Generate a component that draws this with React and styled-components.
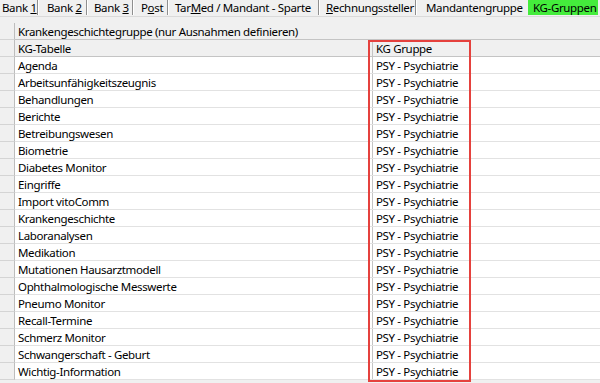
import React from "react";
import styled, { createGlobalStyle } from "styled-components";

const Global = createGlobalStyle`
  html, body { margin: 0; padding: 0; background: #f0f0f0; }
  body { font-family: "Noto Sans", "Open Sans", "DejaVu Sans", sans-serif; font-size: 11.5px; letter-spacing: -0.35px; color: #000; }
`;

const Page = styled.div`
  width: 600px;
  height: 383px;
  overflow: hidden;
  background: #f0f0f0;
  display: flex;
  flex-direction: column;
`;

const TabBar = styled.div`
  display: flex;
  align-items: flex-start;
  height: 16px;
  border-bottom: 1px solid #dadada;
`;

const Tab = styled.div`
  display: flex;
  align-items: center;
  padding-left: ${(p) => p.$pl}px;
  width: ${(p) => p.$w}px;
  box-sizing: border-box;
  white-space: nowrap;
  line-height: 14px;
  height: 15px;
  background: ${(p) => (p.$active ? "#44ec3c" : "transparent")};
  border-right: ${(p) => (p.$plain ? "none" : "1px solid #8f8f8f")};
  box-shadow: ${(p) => (p.$plain ? "none" : "1px 0 0 #ffffff")};
  margin-right: ${(p) => (p.$plain ? 0 : 1)}px;
`;

const Label = styled.span`
  white-space: pre;
`;

const U = styled.span`
  text-decoration: underline;
  text-underline-offset: 1px;
`;

const Spacer = styled.div`
  height: 6px;
`;

const Grid = styled.div`
  position: relative;
  display: flex;
  flex-direction: column;
`;

const Row = styled.div`
  display: flex;
  height: 17px;
  box-sizing: border-box;
  border-bottom: 1px solid ${(p) => (p.$head ? "#c4c4c4" : "#e2e2e2")};
  background: ${(p) => (p.$head ? "#f0f0f0" : "#ffffff")};
`;

const RowHead = styled.div`
  width: 14px;
  flex: none;
  background: #f0f0f0;
  border-right: 1px solid #bdbdbd;
  border-bottom: 1px solid #d4d4d4;
  margin-bottom: -1px;
`;

const Cell = styled.div`
  width: ${(p) => (p.$w ? `${p.$w}px` : "auto")};
  flex: ${(p) => (p.$w ? "none" : "1")};
  box-sizing: border-box;
  padding-left: 3px;
  display: flex;
  align-items: center;
  white-space: nowrap;
  border-right: ${(p) => (p.$div ? "1px solid #c4c4c4" : "none")};
`;

const Highlight = styled.div`
  position: absolute;
  left: 368px;
  top: 17px;
  width: 103px;
  height: 342px;
  box-sizing: border-box;
  border: 2.5px solid #e5413d;
  pointer-events: none;
`;

const tabs = [
  { label: ["Bank ", <U key="u">1</U>], w: 38, pl: 2 },
  { label: ["Bank ", <U key="u">2</U>], w: 48, pl: 8 },
  { label: ["Bank ", <U key="u">3</U>], w: 45, pl: 6 },
  { label: ["P", <U key="u">o</U>, "st"], w: 34, pl: 7 },
  { label: ["Tar", <U key="u">M</U>, "ed / Mandant - Sparte"], w: 150, pl: 6 },
  { label: [<U key="u">R</U>, "echnungssteller"], w: 96, pl: 6 },
  { label: ["Mandantengruppe"], w: 111, pl: 9, plain: true },
];

const rows = [
  "Agenda",
  "Arbeitsunfähigkeitszeugnis",
  "Behandlungen",
  "Berichte",
  "Betreibungswesen",
  "Biometrie",
  "Diabetes Monitor",
  "Eingriffe",
  "Import vitoComm",
  "Krankengeschichte",
  "Laboranalysen",
  "Medikation",
  "Mutationen Hausarztmodell",
  "Ophthalmologische Messwerte",
  "Pneumo Monitor",
  "Recall-Termine",
  "Schmerz Monitor",
  "Schwangerschaft - Geburt",
  "Wichtig-Information",
];

export default function App() {
  return (
    <Page>
      <Global />
      <TabBar>
        {tabs.map((t, i) => (
          <Tab key={i} $w={t.w} $pl={t.pl} $plain={t.plain}>
            <Label>{t.label}</Label>
          </Tab>
        ))}
        <Tab $w={70} $pl={5} $active $plain>
          <Label>KG-Gruppen</Label>
        </Tab>
      </TabBar>
      <Spacer />
      <Grid>
        <Row $head>
          <RowHead />
          <Cell>Krankengeschichtegruppe (nur Ausnahmen definieren)</Cell>
        </Row>
        <Row $head>
          <RowHead />
          <Cell $w={358} $div>KG-Tabelle</Cell>
          <Cell>KG Gruppe</Cell>
        </Row>
        {rows.map((r) => (
          <Row key={r}>
            <RowHead />
            <Cell $w={358} $div>{r}</Cell>
            <Cell $w={100}>PSY - Psychiatrie</Cell>
            <Cell />
          </Row>
        ))}
        <Highlight />
      </Grid>
    </Page>
  );
}
